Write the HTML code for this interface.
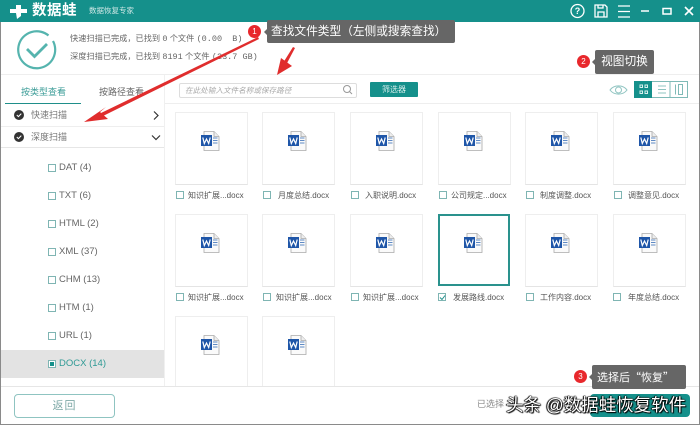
<!DOCTYPE html>
<html style="background:#fff"><head><meta charset="utf-8"><style>
html,body{margin:0;padding:0}
body{width:700px;height:425px;overflow:hidden;position:relative;background:#fff;font-family:"Liberation Sans","Noto Sans CJK SC",sans-serif;color:#666}
#r{position:absolute;left:0;top:0;width:700px;height:425px;overflow:hidden;filter:blur(.35px)}
.a{position:absolute;white-space:nowrap}
.card{position:absolute;width:71px;height:71px;border:1px solid #eee;border-bottom:1px solid #e4e4e4;background:#fff}
.card.sel{border:2px solid #2a928d;width:68px;height:68px}
.w{position:absolute;left:25px;top:18px}
.card.sel .w{left:24px;top:17px}
.cb{position:absolute;width:6px;height:6px;border:1px solid #7fb5b3;background:#fff}
.lb{position:absolute;font-size:8px;line-height:12px;color:#555;white-space:nowrap}
.ft{position:absolute;font-size:9.5px;line-height:12px;color:#666;white-space:nowrap}
.tip{position:absolute;background:#666;color:#fff;border-radius:2px;white-space:nowrap}
.tip:before{content:"";position:absolute;left:-3px;top:50%;margin-top:-3px;border:3px solid transparent;border-left:0;border-right-color:#666}
.dot{position:absolute;width:13px;height:13px;border-radius:50%;background:#e8282c;color:#fff;font-size:8px;line-height:13px;text-align:center}
</style></head><body><div id="r">
<svg width="0" height="0" style="position:absolute"><defs><g id="word">
<path d="M3 .5H13L18 5.500V19.500H3Z" fill="#fafafa" stroke="#a9a9a9" stroke-width=".8"/>
<path d="M13 .5V5.500H18" fill="#eee" stroke="#a9a9a9" stroke-width=".8"/>
<rect x="0" y="4" width="11" height="11" fill="#1f56a8"/>
<path d="M1.800 6.500L3.300 12.500L5.500 8L7.700 12.500L9.200 6.500" fill="none" stroke="#fff" stroke-width="1.200"/>
<path d="M12 7H16.500M12 9.500H16.500M12 12H16.500" stroke="#5f8ac4" stroke-width=".9"/>
</g></defs></svg>

<!-- header -->
<div class="a" style="left:0;top:0;width:700px;height:22px;background:#15908b"></div>
<svg class="a" style="left:9px;top:4px" width="20" height="16"><path d="M7 1H12V5H18V9H12V12L8 15L7 9H1V5H7Z" fill="#fff"/></svg>
<div class="a" style="left:32px;top:2px;font-size:14.5px;line-height:18px;font-weight:bold;color:#fff;letter-spacing:.5px">数据蛙</div>
<div class="a" style="left:89px;top:5px;font-size:7.5px;line-height:11px;color:#cfe8e6">数据恢复专家</div>
<svg class="a" style="left:568px;top:2px" width="132" height="20" fill="none" stroke="#fff" stroke-width="1.300">
<circle cx="9.500" cy="9" r="6.500"/><text x="9.500" y="12" font-size="9" font-weight="bold" fill="#fff" stroke="none" text-anchor="middle" font-family="Liberation Sans">?</text>
<path d="M27 3H37L39 5V15H27ZM30 15V10H36V15M30 3V6H35V3"/>
<path d="M50 4H62M50 9.500H62M50 15H62"/>
<path d="M73 9H81" stroke-width="1.500"/>
<rect x="95" y="6.500" width="8" height="5.500" stroke-width="1.500"/>
<path d="M117 5L125 13M125 5L117 13" stroke-width="1.600"/>
</svg>

<!-- status -->
<svg class="a" style="left:15px;top:27px" width="44" height="44" fill="none"><path d="M33.500 8.500A18.500 18.500 0 1 0 38 14" stroke="#55b4ae" stroke-width="2.200"/><path d="M12 22L19.500 29.500L32 17" stroke="#55b4ae" stroke-width="2.800"/></svg>
<div class="a" style="left:70px;top:33px;font-size:8.200px;line-height:12px;color:#666">快速扫描已完成，已找到 <span style="font-family:'Liberation Mono';font-size:8.500px">0</span> 个文件 <span style="font-family:'Liberation Mono';font-size:8.500px">(0.00&nbsp; B)</span></div>
<div class="a" style="left:70px;top:51px;font-size:8.200px;line-height:12px;color:#666">深度扫描已完成，已找到 <span style="font-family:'Liberation Mono';font-size:8.500px">8191</span> 个文件 <span style="font-family:'Liberation Mono';font-size:8.500px">(23.7 GB)</span></div>

<!-- rules -->
<div class="a" style="left:0;top:74px;width:700px;height:1px;background:#eee"></div>
<div class="a" style="left:164px;top:75px;width:1px;height:311px;background:#f0f0f0"></div>
<div class="a" style="left:165px;top:103px;width:535px;height:1px;background:#eee"></div>

<!-- tabs -->
<div class="a" style="left:21px;top:86px;font-size:9px;line-height:13px;color:#3d9d98">按类型查看</div>
<div class="a" style="left:99px;top:86px;font-size:9px;line-height:13px;color:#666">按路径查看</div>
<div class="a" style="left:5px;top:103px;width:76px;height:1px;background:#1f8f8a"></div>

<!-- search -->
<div class="a" style="left:179px;top:83px;width:176px;height:13px;border:1px solid #ddd;border-radius:2px"></div>
<div class="a" style="left:185px;top:85px;font-size:7.600px;line-height:11px;color:#aaa;font-style:italic">在此处输入文件名称或保存路径</div>
<svg class="a" style="left:342px;top:84px" width="12" height="12" fill="none" stroke="#999"><circle cx="5" cy="5" r="3.500"/><path d="M7.500 7.500L10 10"/></svg>
<div class="a" style="left:370px;top:82px;width:48px;height:15px;background:#15908b;border-radius:1px;color:#d5ecea;font-size:8px;line-height:15px;text-align:center">筛选器</div>

<!-- view -->
<svg class="a" style="left:609px;top:83px" width="20" height="14" fill="none" stroke="#8fc4c1"><path d="M1 7C5 1.500 14 1.500 18 7C14 12.500 5 12.500 1 7Z"/><circle cx="9.500" cy="7" r="3"/></svg>
<div class="a" style="left:634px;top:81px;width:52px;height:15px;border:1px solid #7fbab7"></div>
<div class="a" style="left:634px;top:81px;width:18px;height:17px;background:#15908b"></div>
<svg class="a" style="left:634px;top:81px" width="56" height="17" fill="none">
<g fill="none" stroke="#d8f0ee" stroke-width="1"><rect x="6" y="4" width="2.500" height="2.500"/><rect x="11" y="4" width="2.500" height="2.500"/><rect x="6" y="10" width="2.500" height="2.500"/><rect x="11" y="10" width="2.500" height="2.500"/></g>
<path d="M36 0V17" stroke="#7fbab7"/>
<path d="M24 5H32M24 8.500H32M24 12H32" stroke="#8fc4c1"/>
<path d="M41.500 3.500V13.500" stroke="#7fbab7"/><rect x="44.500" y="3.500" width="4" height="10" stroke="#7fbab7"/>
</svg>

<!-- sidebar -->
<div class="a" style="left:0;top:126px;width:164px;height:1px;background:#eee"></div>
<div class="a" style="left:0;top:147px;width:164px;height:1px;background:#e6e6e6"></div>
<svg class="a" style="left:13px;top:109px" width="12" height="34"><circle cx="6" cy="6" r="5" fill="#333"/><path d="M3.800 6L5.400 7.600L8.300 4.600" stroke="#fff" fill="none"/><circle cx="6" cy="28" r="5" fill="#333"/><path d="M3.800 28L5.400 29.600L8.300 26.600" stroke="#fff" fill="none"/></svg>
<div class="a" style="left:31px;top:109px;font-size:9px;line-height:13px;color:#777">快速扫描</div>
<div class="a" style="left:31px;top:131px;font-size:9px;line-height:13px;color:#777">深度扫描</div>
<svg class="a" style="left:150px;top:110px" width="12" height="34" fill="none" stroke="#333" stroke-width="1.200"><path d="M4 1.500L8 5.500L4 9.500"/><path d="M2 25.500L6 29.500L10 25.500"/></svg>

<div class="a" style="left:0;top:350px;width:164px;height:28px;background:#e3e3e3"></div>
<div class="cb" style="left:48px;top:164px"></div><div class="ft" style="left:59px;top:162px">DAT (4)</div>
<div class="cb" style="left:48px;top:192px"></div><div class="ft" style="left:59px;top:190px">TXT (6)</div>
<div class="cb" style="left:48px;top:220px"></div><div class="ft" style="left:59px;top:218px">HTML (2)</div>
<div class="cb" style="left:48px;top:248px"></div><div class="ft" style="left:59px;top:246px">XML (37)</div>
<div class="cb" style="left:48px;top:276px"></div><div class="ft" style="left:59px;top:274px">CHM (13)</div>
<div class="cb" style="left:48px;top:304px"></div><div class="ft" style="left:59px;top:302px">HTM (1)</div>
<div class="cb" style="left:48px;top:332px"></div><div class="ft" style="left:59px;top:330px">URL (1)</div>
<div class="cb" style="left:48px;top:360px"></div><div class="a" style="left:50px;top:362px;width:4px;height:4px;background:#15908b"></div><div class="ft" style="left:59px;top:358px;color:#2f9a95">DOCX (14)</div>

<!-- cards -->
<div class="card" style="left:175px;top:112px"><svg class="w" width="20" height="21"><use href="#word"/></svg></div>
<div class="card" style="left:262px;top:112px"><svg class="w" width="20" height="21"><use href="#word"/></svg></div>
<div class="card" style="left:350px;top:112px"><svg class="w" width="20" height="21"><use href="#word"/></svg></div>
<div class="card" style="left:438px;top:112px"><svg class="w" width="20" height="21"><use href="#word"/></svg></div>
<div class="card" style="left:525px;top:112px"><svg class="w" width="20" height="21"><use href="#word"/></svg></div>
<div class="card" style="left:613px;top:112px"><svg class="w" width="20" height="21"><use href="#word"/></svg></div>
<div class="card" style="left:175px;top:214px"><svg class="w" width="20" height="21"><use href="#word"/></svg></div>
<div class="card" style="left:262px;top:214px"><svg class="w" width="20" height="21"><use href="#word"/></svg></div>
<div class="card" style="left:350px;top:214px"><svg class="w" width="20" height="21"><use href="#word"/></svg></div>
<div class="card sel" style="left:438px;top:214px"><svg class="w" width="20" height="21"><use href="#word"/></svg></div>
<div class="card" style="left:525px;top:214px"><svg class="w" width="20" height="21"><use href="#word"/></svg></div>
<div class="card" style="left:613px;top:214px"><svg class="w" width="20" height="21"><use href="#word"/></svg></div>
<div class="card" style="left:175px;top:316px"><svg class="w" width="20" height="21"><use href="#word"/></svg></div>
<div class="card" style="left:262px;top:316px"><svg class="w" width="20" height="21"><use href="#word"/></svg></div>

<div class="cb" style="left:176px;top:191px"></div><div class="lb" style="left:188px;top:190px">知识扩展...docx</div>
<div class="cb" style="left:263px;top:191px"></div><div class="lb" style="left:278px;top:190px">月度总结.docx</div>
<div class="cb" style="left:351px;top:191px"></div><div class="lb" style="left:365px;top:190px">入职说明.docx</div>
<div class="cb" style="left:439px;top:191px"></div><div class="lb" style="left:451px;top:190px">公司规定...docx</div>
<div class="cb" style="left:526px;top:191px"></div><div class="lb" style="left:540px;top:190px">制度调整.docx</div>
<div class="cb" style="left:614px;top:191px"></div><div class="lb" style="left:628px;top:190px">调整意见.docx</div>
<div class="cb" style="left:176px;top:293px"></div><div class="lb" style="left:188px;top:292px">知识扩展...docx</div>
<div class="cb" style="left:263px;top:293px"></div><div class="lb" style="left:276px;top:292px">知识扩展...docx</div>
<div class="cb" style="left:351px;top:293px"></div><div class="lb" style="left:363px;top:292px">知识扩展...docx</div>
<div class="cb" style="left:438px;top:293px"></div><svg class="a" style="left:438px;top:293px" width="9" height="9" fill="none" stroke="#1f8f8a"><path d="M2 4.500L4 6.500L7 2.500"/></svg><div class="lb" style="left:453px;top:292px">发展路线.docx</div>
<div class="cb" style="left:526px;top:293px"></div><div class="lb" style="left:540px;top:292px">工作内容.docx</div>
<div class="cb" style="left:613px;top:293px"></div><div class="lb" style="left:628px;top:292px">年度总结.docx</div>

<!-- footer -->
<div class="a" style="left:0;top:386px;width:700px;height:39px;background:#fff;border-top:1px solid #e6e6e6;box-sizing:border-box"></div>
<div class="a" style="left:14px;top:394px;width:99px;height:22px;border:1px solid #8fc4c1;border-radius:4px;color:#7fa9a7;font-size:11px;line-height:22px;text-align:center;letter-spacing:1px">返回</div>
<div class="a" style="left:477px;top:398px;font-size:9px;line-height:12px;color:#888">已选择</div>
<div class="a" style="left:590px;top:394px;width:100px;height:23px;background:#15908b;border-radius:4px"></div>
<div class="a" style="left:506px;top:393px;font-size:17.500px;line-height:24px;color:#fff;text-shadow:0 0 1px #000,0 0 1px #000,0 0 1.500px #000,1px 1px 1px #000,-1px 0 1px #000">头条 @数据蛙恢复软件</div>

<!-- window edges -->
<div class="a" style="left:0;top:22px;width:1px;height:403px;background:#8a8a8a"></div>
<div class="a" style="left:699px;top:22px;width:1px;height:403px;background:#8a8a8a"></div>
<div class="a" style="left:0;top:424px;width:700px;height:1px;background:#8a8a8a"></div>

<!-- annotations -->
<svg class="a" style="left:0;top:0" width="700" height="425" fill="#e02d2d">
<path d="M258 37L101 113L103 116L259 39Z"/>
<path d="M84 122L106 107L100 112L108 119Z"/>
<path d="M293 47L283 63L286 65L295 48Z"/>
<path d="M277 75L281 58L292 66Z"/>
</svg>
<div class="dot" style="left:248px;top:25px">1</div>
<div class="tip" style="left:267px;top:20px;width:188px;height:23px;font-size:11.700px;line-height:23px;padding-left:4px;box-sizing:border-box">查找文件类型（左侧或搜索查找）</div>
<div class="dot" style="left:577px;top:55px">2</div>
<div class="tip" style="left:595px;top:50px;width:59px;height:24px;font-size:11.700px;line-height:24px;text-align:center">视图切换</div>
<div class="dot" style="left:574px;top:370px">3</div>
<div class="tip" style="left:592px;top:365px;width:94px;height:24px;font-size:11px;line-height:24px;padding-left:5px;box-sizing:border-box;font-family:'Noto Sans CJK SC',sans-serif">选择后“恢复”</div>
</div></body></html>
